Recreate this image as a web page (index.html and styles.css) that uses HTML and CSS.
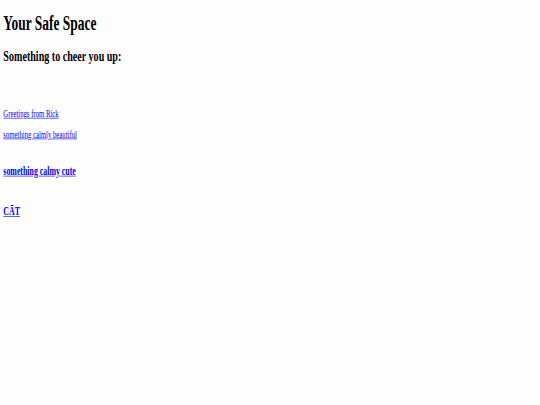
FILE: index.html
```html
<!DOCTYPE html>
<html lang="en">
<head>
  <meta charset="UTF-8">
  <title>Your Safe Space</title>
  <link rel="stylesheet" href="styles.css">
</head>
<body>

<div class="page">
  <h1>Your Safe Space</h1>
  <h2>Something to cheer you up:</h2>

  <div class="links">
    <p class="small first"><a href="#">Greetings from Rick</a></p>
    <p class="small"><a href="#">something calmly beautiful</a></p>
    <h3 class="cute"><a href="#">something calmy cute</a></h3>
    <h3 class="cat"><a href="#">CĀT</a></h3>
  </div>
</div>

</body>
</html>
```

FILE: styles.css
```css
* {
  box-sizing: border-box;
  font-family: 'Liberation Serif', 'Times New Roman', serif;
}

body {
  margin: 0;
  background-color: #fdfdfd;
  color: #000;
}

/* the page is drawn at full size, then squeezed into the small window */
.page {
  padding: 19px 8px 0;
  transform: scale(0.42, 0.63);
  transform-origin: 0 0;
}

h1 {
  margin: 0;
  font-size: 32px;
  line-height: 37px;
}

h2 {
  margin: 19px 0 0;
  font-size: 24px;
  line-height: 28px;
}

a {
  color: #0000ee;
}

.small {
  margin: 15px 0 0;
  font-size: 16px;
  line-height: 18px;
}

.small.first {
  margin-top: 69px;
}

h3 {
  font-size: 18.72px;
  line-height: 22px;
}

.cute {
  margin: 38px 0 0;
}

.cat {
  margin: 42px 0 0;
}
```
